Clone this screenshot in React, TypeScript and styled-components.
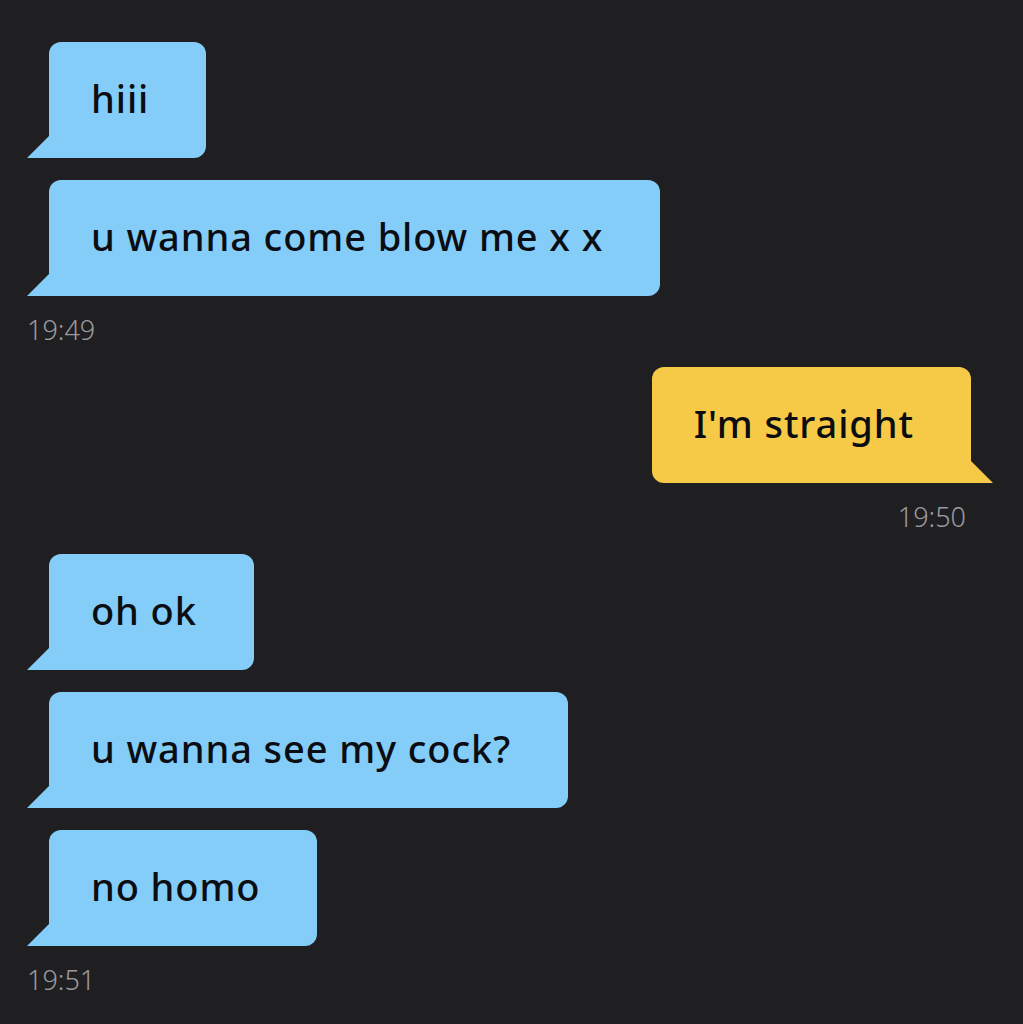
import styled, { createGlobalStyle } from "styled-components";

type Side = "in" | "out";

type Group = {
  side: Side;
  texts: string[];
  time: string;
};

const groups: Group[] = [
  { side: "in", texts: ["hiii", "u wanna come blow me x x"], time: "19:49" },
  { side: "out", texts: ["I'm straight"], time: "19:50" },
  { side: "in", texts: ["oh ok", "u wanna see my cock?", "no homo"], time: "19:51" },
];

const GlobalStyle = createGlobalStyle`
  html, body {
    margin: 0;
    background: #1f1f21;
  }
  body {
    font-family: "Noto Sans", "Open Sans", sans-serif;
  }
`;

const Thread = styled.div`
  width: 1023px;
  height: 1024px;
  box-sizing: border-box;
  padding: 42px 52px 0 27px;
  display: flex;
  flex-direction: column;
  gap: 22px;
  overflow: hidden;
`;

const MessageGroup = styled.div<{ $side: Side }>`
  display: flex;
  flex-direction: column;
  align-items: ${p => (p.$side === "in" ? "flex-start" : "flex-end")};
  gap: 22px;
`;

const Bubble = styled.div<{ $side: Side }>`
  position: relative;
  height: 116px;
  box-sizing: border-box;
  display: flex;
  align-items: center;
  padding: 0 57px 4px 42px;
  margin-left: ${p => (p.$side === "in" ? "22px" : "0")};
  background: ${p => (p.$side === "in" ? "#83cdf8" : "#f6ca46")};
  color: #0b0d12;
  font-size: 38px;
  font-weight: 500;
  letter-spacing: 0.9px;
  white-space: nowrap;
  border-radius: ${p => (p.$side === "in" ? "12px 12px 12px 0" : "12px 12px 0 12px")};

  &::before {
    content: "";
    position: absolute;
    bottom: 0;
    width: 23px;
    height: 23px;
    background: inherit;
    ${p =>
      p.$side === "in"
        ? "left: -22px; clip-path: polygon(100% 0, 100% 100%, 0 100%);"
        : "right: -22px; clip-path: polygon(0 0, 100% 100%, 0 100%);"}
  }
`;

const Time = styled.div<{ $side: Side }>`
  margin-top: -3px;
  margin-right: ${p => (p.$side === "out" ? "5px" : "0")};
  font-size: 27px;
  font-weight: 300;
  line-height: 30px;
  color: #9b9a9f;
`;

export default function App() {
  return (
    <>
      <GlobalStyle />
      <Thread>
        {groups.map(g => (
          <MessageGroup key={g.time} $side={g.side}>
            {g.texts.map(t => (
              <Bubble key={t} $side={g.side}>
                {t}
              </Bubble>
            ))}
            <Time $side={g.side}>{g.time}</Time>
          </MessageGroup>
        ))}
      </Thread>
    </>
  );
}
